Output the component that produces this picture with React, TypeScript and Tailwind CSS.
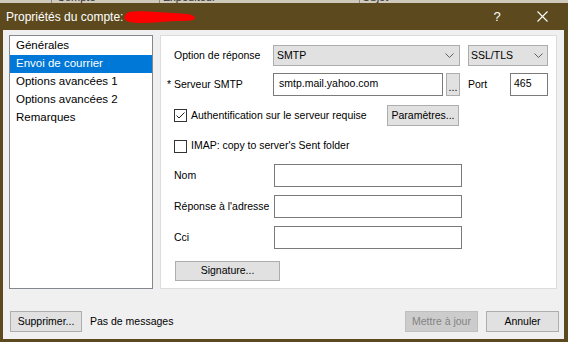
import React from "react";

const Chevron = () => (
  <svg width="9" height="5" viewBox="0 0 9 5" className="shrink-0">
    <path d="M0.5 0.5L4.5 4.5L8.5 0.5" fill="none" stroke="#606060" strokeWidth="1" />
  </svg>
);

function Checkbox({ checked }: { checked?: boolean }) {
  return (
    <div className="w-[13px] h-[13px] bg-white border border-[#333333] flex items-center justify-center shrink-0">
      {checked && (
        <svg width="11" height="11" viewBox="0 0 11 11">
          <path d="M1.5 5.5L4 8L9.5 2.5" fill="none" stroke="#222222" strokeWidth="1" />
        </svg>
      )}
    </div>
  );
}

function Btn({
  children,
  className = "",
  disabled,
}: {
  children: React.ReactNode;
  className?: string;
  disabled?: boolean;
}) {
  return (
    <div
      className={`flex items-center justify-center border shrink-0 whitespace-nowrap ${
        disabled
          ? "bg-[#cccccc] border-[#bfbfbf] text-[#838383]"
          : "bg-[#e1e1e1] border-[#adadad] text-black"
      } ${className}`}
    >
      {children}
    </div>
  );
}

export default function App() {
  const items = [
    "Générales",
    "Envoi de courrier",
    "Options avancées 1",
    "Options avancées 2",
    "Remarques",
  ];
  return (
    <div className="w-[568px] h-[342px] bg-[#5c4a1e] flex flex-col overflow-hidden font-['Liberation_Sans',Arial,sans-serif] text-black">
      {/* peek of the window behind */}
      <div className="h-[3px] bg-[#cfcabb] flex overflow-hidden text-[11px] leading-[12px] text-[#303030] shrink-0">
        <div className="w-[52px] h-[12px] -mt-[9px] border-r border-[#8a8a8a] shrink-0" />
        <div className="w-[108px] h-[12px] -mt-[9px] pl-[5px] border-r border-[#8a8a8a] shrink-0">Compte</div>
        <div className="w-[200px] h-[12px] -mt-[9px] pl-[3px] border-r border-[#8a8a8a] shrink-0">Expéditeur</div>
        <div className="h-[12px] -mt-[9px] pl-[2px]">Objet</div>
      </div>

      {/* title bar */}
      <div className="h-[27px] flex items-center pl-[6px] text-white text-[12px] shrink-0">
        <span className="whitespace-nowrap">Propriétés du compte:</span>
        <svg width="72" height="14" viewBox="0 0 72 14" className="ml-[1px] shrink-0">
          <path
            d="M2 4 C4 0.5, 14 1, 24 1.5 C36 2, 46 3, 57 3.5 C65 4, 71 5, 71 8 C71 11, 62 11, 52 11 C40 11.5, 30 13, 18 13 C8 13, 0.5 12, 0.5 8 C0.5 6, 1 5, 2 4 Z"
            fill="#ff0000"
          />
        </svg>
        <div className="ml-auto flex items-center">
          <div className="w-[30px] flex justify-center text-[13px]">?</div>
          <div className="w-[30px] ml-[15px] flex justify-center">
            <svg width="11" height="11" viewBox="0 0 11 11">
              <path d="M0.5 0.5L10.5 10.5M10.5 0.5L0.5 10.5" stroke="#ffffff" strokeWidth="1.1" />
            </svg>
          </div>
          <div className="w-[11px]" />
        </div>
      </div>

      {/* body */}
      <div className="flex-1 ml-[3px] mr-[4px] mb-[3px] bg-[#f0f0f0] pt-[5px] pl-[6px] pr-[7px] flex flex-col">
        <div className="flex h-[254px] gap-[7px]">
          {/* list */}
          <div className="w-[144px] h-full bg-white border border-[#828790] pt-[1px] flex flex-col shrink-0">
            {items.map((it, i) => (
              <div
                key={it}
                className={`h-[18px] pl-[6px] flex items-center text-[11.5px] whitespace-nowrap ${
                  i === 1 ? "bg-[#0078d7] text-white" : ""
                }`}
              >
                {it}
              </div>
            ))}
          </div>

          {/* panel */}
          <div className="w-[397px] h-full bg-white border border-[#dcdcdc] pl-[13px] pt-[9px] flex flex-col text-[10.5px]">
            {/* row 1 */}
            <div className="flex items-center h-[21px]">
              <div className="w-[99px] shrink-0 whitespace-nowrap">Option de réponse</div>
              <div className="w-[187px] h-[21px] bg-[#e1e1e1] border border-[#adadad] flex items-center pl-[3px] pr-[5px] shrink-0">
                <span className="flex-1">SMTP</span>
                <Chevron />
              </div>
              <div className="w-[80px] h-[21px] ml-[8px] bg-[#e1e1e1] border border-[#adadad] flex items-center pl-[2px] pr-[4px] shrink-0">
                <span className="flex-1">SSL/TLS</span>
                <Chevron />
              </div>
            </div>

            {/* row 2 */}
            <div className="flex items-center h-[23px] mt-[7px]">
              <div className="w-[106px] -ml-[7px] shrink-0 whitespace-nowrap">* Serveur SMTP</div>
              <div className="w-[170px] h-[23px] bg-white border border-[#7a7a7a] pl-[5px] pt-[3px] shrink-0 leading-[12px]">
                smtp.mail.yahoo.com
              </div>
              <Btn className="w-[14px] h-[23px] ml-[3px] items-end pb-[3px] leading-[10px]">...</Btn>
              <div className="w-[42px] ml-[8px] shrink-0">Port</div>
              <div className="w-[38px] h-[23px] bg-white border border-[#7a7a7a] pl-[3px] pt-[3px] shrink-0 leading-[12px]">
                465
              </div>
            </div>

            {/* row 3 */}
            <div className="flex items-center h-[21px] mt-[9px]">
              <Checkbox checked />
              <div className="w-[200px] pl-[4px] shrink-0 whitespace-nowrap">
                Authentification sur le serveur requise
              </div>
              <Btn className="w-[72px] h-[21px]">Paramètres...</Btn>
            </div>

            {/* row 4 */}
            <div className="flex items-center h-[14px] mt-[13px]">
              <Checkbox />
              <div className="pl-[4px] whitespace-nowrap">IMAP: copy to server's Sent folder</div>
            </div>

            {/* Nom */}
            <div className="flex items-center h-[23px] mt-[11px]">
              <div className="w-[100px] shrink-0">Nom</div>
              <div className="w-[188px] h-[23px] bg-white border border-[#7a7a7a] shrink-0" />
            </div>
            <div className="flex items-center h-[23px] mt-[8px]">
              <div className="w-[100px] shrink-0 whitespace-nowrap">Réponse à l'adresse</div>
              <div className="w-[188px] h-[23px] bg-white border border-[#7a7a7a] shrink-0" />
            </div>
            <div className="flex items-center h-[23px] mt-[8px]">
              <div className="w-[100px] shrink-0">Cci</div>
              <div className="w-[188px] h-[23px] bg-white border border-[#7a7a7a] shrink-0" />
            </div>

            <Btn className="w-[105px] h-[20px] mt-[12px] ml-[1px]">Signature...</Btn>
          </div>
        </div>

        {/* bottom row */}
        <div className="flex items-center h-[21px] mt-[22px] text-[10.5px] -mr-[2px]">
          <Btn className="w-[72px] h-[21px] ml-[1px]">Supprimer...</Btn>
          <div className="ml-[8px] whitespace-nowrap">Pas de messages</div>
          <div className="ml-auto flex items-center">
            <Btn disabled className="w-[73px] h-[21px]">Mettre à jour</Btn>
            <Btn className="w-[73px] h-[21px] ml-[8px]">Annuler</Btn>
          </div>
        </div>
      </div>
    </div>
  );
}
